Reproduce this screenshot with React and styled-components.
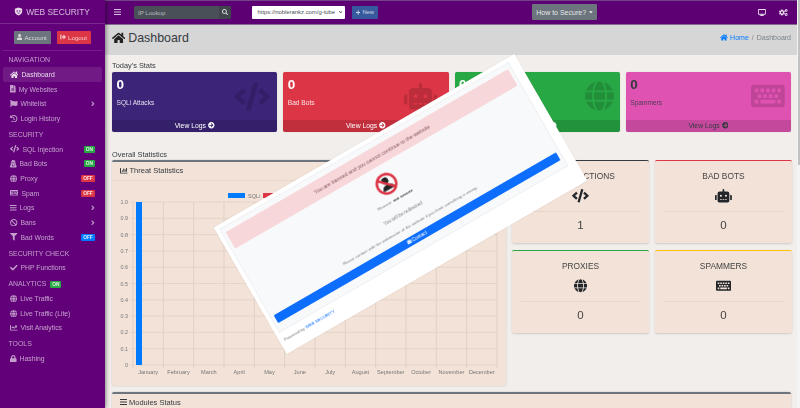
import React from "react";
import styled, { createGlobalStyle } from "styled-components";
import {
  FaHome, FaFileAlt, FaFlag, FaHistory, FaCode, FaRobot, FaGlobe, FaKeyboard, FaBars, FaBan, FaFilter,
  FaCheck, FaChartLine, FaLock, FaUser, FaSignOutAlt, FaDesktop, FaCogs, FaSearch, FaPlus, FaAngleRight,
  FaArrowCircleRight, FaChartBar, FaEnvelope, FaCaretDown, FaChevronDown, FaUserSecret,
} from "react-icons/fa";

const Global = createGlobalStyle`
  html, body { margin: 0; padding: 0; width: 800px; height: 408px; overflow: hidden; background: #f1eeeb; }
  body { font-family: "Liberation Sans", Arial, sans-serif; color: #343a40; }
  * { box-sizing: border-box; }
`;

/* Font Awesome glyphs keep their natural proportions, as on the original page */
const glyph = (Icon, ratio) => styled(Icon)`
  width: ${ratio}em;
  height: 1em;
  flex: none;
`;

const HomeIcon = glyph(FaHome, 1.125);
const FileIcon = glyph(FaFileAlt, 0.75);
const FlagIcon = glyph(FaFlag, 1);
const HistoryIcon = glyph(FaHistory, 1);
const CodeIcon = glyph(FaCode, 1.25);
const RobotIcon = glyph(FaRobot, 1.25);
const SecretIcon = glyph(FaUserSecret, 0.875);
const GlobeIcon = glyph(FaGlobe, 0.96875);
const KeyboardIcon = glyph(FaKeyboard, 1.125);
const BarsIcon = glyph(FaBars, 0.875);
const BanGlyph = glyph(FaBan, 1);
const FilterIcon = glyph(FaFilter, 1);
const CheckIcon = glyph(FaCheck, 1);
const LineIcon = glyph(FaChartLine, 1);
const LockIcon = glyph(FaLock, 0.875);
const UserIcon = glyph(FaUser, 0.875);
const SignOutIcon = glyph(FaSignOutAlt, 1);
const DesktopIcon = glyph(FaDesktop, 1.125);
const CogsIcon = glyph(FaCogs, 1.25);
const SearchIcon = glyph(FaSearch, 1);
const PlusIcon = glyph(FaPlus, 0.875);
const AngleIcon = glyph(FaAngleRight, 0.5);
const ArrowIcon = glyph(FaArrowCircleRight, 1);
const ChartBarIcon = glyph(FaChartBar, 1);
const MailIcon = glyph(FaEnvelope, 1);
const CaretIcon = glyph(FaCaretDown, 0.625);
const ChevDownIcon = glyph(FaChevronDown, 0.875);

const Page = styled.div`
  display: flex;
  width: 800px;
  height: 408px;
  overflow: hidden;
  position: relative;
  filter: blur(0.3px);
`;

const Sidebar = styled.aside`
  width: 105px;
  flex: none;
  background: #610078;
  color: rgba(255, 255, 255, 0.62);
  box-shadow: 1px 0 4px rgba(0, 0, 0, 0.45);
  z-index: 2;
  display: flex;
  flex-direction: column;
`;

const Brand = styled.div`
  height: 24px;
  display: flex;
  align-items: center;
  justify-content: center;
  gap: 3px;
  font-size: 8.4px;
  color: rgba(255, 255, 255, 0.72);
  border-bottom: 1px solid #7a2a8e;
  padding-right: 1px;
`;

const UserPanel = styled.div`
  height: 27px;
  margin: 0 3px;
  display: flex;
  justify-content: center;
  align-items: center;
  gap: 6px;
  border-bottom: 1px solid #7a1a90;
  padding: 0 8px 0 7px;
`;

const SmallBtn = styled.div`
  height: 13px;
  width: ${(p) => p.$w}px;
  background: ${(p) => p.$bg};
  color: rgba(255, 255, 255, 0.72);
  font-size: 6.2px;
  display: flex;
  align-items: center;
  justify-content: center;
  gap: 2px;
  border-radius: 1px;
  svg { font-size: 6px; }
`;

const SideLabel = styled.div`
  height: 16px;
  padding: 0 0 3px 8.5px;
  display: flex;
  align-items: flex-end;
  gap: 4px;
  font-size: 6.9px;
  line-height: 8px;
  color: rgba(255, 255, 255, 0.6);
`;

const SideItem = styled.div`
  height: 14.7px;
  margin: 0 3px;
  padding: 0 7px;
  display: flex;
  align-items: center;
  gap: 3px;
  font-size: 6.8px;
  border-radius: 2px;
  background: ${(p) => (p.$active ? "rgba(255,255,255,.1)" : "transparent")};
  color: ${(p) => (p.$active ? "rgba(255,255,255,.85)" : "rgba(255,255,255,.62)")};
  svg { font-size: 7.5px; }
`;

const ItemName = styled.span`
  flex: 1;
  white-space: nowrap;
`;

const Badge = styled.span`
  background: ${(p) => p.$bg};
  color: rgba(255, 255, 255, 0.85);
  font-size: 4.8px;
  font-weight: 700;
  line-height: 7px;
  padding: 0 2px;
  border-radius: 1px;
  min-width: ${(p) => p.$min || 10}px;
  text-align: center;
`;

const Main = styled.main`
  flex: 1;
  min-width: 0;
  display: flex;
  flex-direction: column;
`;

const Navbar = styled.nav`
  height: 25px;
  flex: none;
  background: #5c0073;
  border-top: 1px solid #73438a;
  border-bottom: 1px solid #86698f;
  display: flex;
  align-items: center;
  padding: 0 9px 0 9px;
  color: rgba(255, 255, 255, 0.75);
`;

const BurgerSlot = styled.div`
  font-size: 8px;
  margin-right: 13px;
  margin-top: -1px;
  display: flex;
`;

const SearchGroup = styled.div`
  width: 97px;
  height: 13px;
  margin-top: -1px;
  display: flex;
  background: #495057;
  border-radius: 2px;
  overflow: hidden;
  font-size: 6.1px;
  color: rgba(255, 255, 255, 0.6);
`;

const SearchField = styled.div`
  flex: 1;
  padding-left: 4px;
  display: flex;
  align-items: center;
`;

const SearchBtn = styled.div`
  width: 12px;
  background: #3f464c;
  display: flex;
  align-items: center;
  justify-content: center;
  font-size: 6px;
  color: #d8d8d8;
`;

const SiteSelect = styled.div`
  width: 93px;
  height: 13px;
  margin: -1px 0 0 21px;
  background: #fff;
  border-radius: 1px;
  display: flex;
  align-items: center;
  justify-content: space-between;
  padding: 0 3px 0 5.5px;
  font-size: 5.9px;
  color: #495057;
  white-space: nowrap;
  svg { font-size: 4px; color: #333; }
`;

const NewBtn = styled.div`
  width: 26px;
  height: 13px;
  margin: -1px 0 0 7px;
  background: #375a9e;
  border-radius: 1px;
  display: flex;
  align-items: center;
  justify-content: center;
  gap: 2px;
  font-size: 5.8px;
  color: rgba(255, 255, 255, 0.75);
  svg { font-size: 5px; }
`;

const HowBtn = styled.div`
  width: 65px;
  height: 16px;
  margin: -1px 0 0 154px;
  background: #6c757d;
  border-radius: 1px;
  display: flex;
  align-items: center;
  justify-content: center;
  gap: 3px;
  font-size: 7px;
  color: rgba(255, 255, 255, 0.85);
  svg { font-size: 6px; }
`;

const NavIcons = styled.div`
  margin-left: auto;
  display: flex;
  align-items: center;
  gap: 13px;
  font-size: 7px;
  margin-top: -1px;
  color: rgba(255, 255, 255, 0.85);
`;

const PageHead = styled.header`
  height: 30px;
  flex: none;
  background: #d6d6d6;
  display: flex;
  align-items: center;
  justify-content: space-between;
  padding: 0 6px 5px 7px;
`;

const Title = styled.h1`
  margin: 0;
  font-size: 12.4px;
  font-weight: 400;
  color: #343a40;
  display: flex;
  align-items: center;
  gap: 3px;
  svg { font-size: 11.8px; color: #222; }
`;

const Crumbs = styled.div`
  display: flex;
  align-items: center;
  gap: 3px;
  font-size: 7px;
  color: #7b8288;
`;

const CrumbHome = styled.span`
  color: #007bff;
  display: flex;
  align-items: center;
  gap: 2px;
`;

const Content = styled.div`
  flex: 1;
  min-height: 0;
  overflow: hidden;
  padding: 0 6px 0 7px;
`;

const SectionTitle = styled.div`
  font-size: 7.4px;
  line-height: 9px;
  color: #343a40;
  padding-top: ${(p) => p.$top}px;
  height: ${(p) => p.$h}px;
`;

const TopGrid = styled.div`
  display: grid;
  grid-template-columns: repeat(4, 165.25px);
  gap: 6px;
`;

const TopCard = styled.div`
  height: 59.5px;
  background: ${(p) => p.$bg};
  color: ${(p) => p.$fg};
  border-radius: 2px;
  box-shadow: 0 0 1px rgba(0, 0, 0, 0.25);
  overflow: hidden;
  display: flex;
  flex-direction: column;
`;

const TopBody = styled.div`
  flex: 1;
  display: flex;
  align-items: center;
  justify-content: space-between;
  padding: 0 ${(p) => p.$pr}px 0 4.5px;
`;

const TopText = styled.div`
  display: flex;
  flex-direction: column;
  align-self: flex-start;
`;

const TopNum = styled.div`
  font-size: 13.5px;
  font-weight: 700;
  line-height: 16px;
  margin-top: 5px;
`;

const TopLabel = styled.div`
  font-size: 6.6px;
  line-height: 9px;
  margin-top: 5px;
  opacity: 0.85;
`;

const TopIcon = styled.div`
  font-size: ${(p) => p.$size}px;
  line-height: 0;
  color: rgba(0, 0, 0, 0.15);
  margin-top: 1px;
`;

const TopFoot = styled.div`
  height: 12px;
  background: rgba(0, 0, 0, 0.12);
  display: flex;
  align-items: center;
  justify-content: center;
  gap: 2px;
  font-size: 6.8px;
  svg { font-size: 6.6px; }
`;

const StatsRow = styled.div`
  display: flex;
  gap: 6px;
  align-items: flex-start;
`;

const Panel = styled.section`
  background: #f2e2d8;
  border-top: 2px solid #6c757d;
  border-radius: 2px;
  box-shadow: 0 0 2px rgba(0, 0, 0, 0.2);
`;

const ChartPanel = styled(Panel)`
  width: 394px;
  height: 226px;
  flex: none;
`;

const PanelHead = styled.div`
  height: 19px;
  padding: 0 0 1px 8px;
  display: flex;
  align-items: center;
  gap: 2px;
  font-size: 7.5px;
  color: #343a40;
  border-bottom: 1px solid #e6d6cb;
  svg { font-size: 7.5px; }
`;

const ChartSvg = styled.svg`
  display: block;
`;

const Minis = styled.div`
  display: grid;
  grid-template-columns: repeat(2, 137px);
  gap: 7px 6px;
`;

const Mini = styled.div`
  height: 83px;
  background: #f2e2d8;
  border-top: 1px solid ${(p) => p.$line};
  border-radius: 2px;
  box-shadow: 0 1px 2px rgba(0, 0, 0, 0.15);
  display: flex;
  flex-direction: column;
  align-items: center;
  padding-top: 11px;
  color: #444;
`;

const MiniTitle = styled.div`
  font-size: 8.4px;
  line-height: 9px;
`;

const MiniIcon = styled.div`
  height: 13.5px;
  margin-top: 8px;
  font-size: 13.5px;
  color: #22262a;
  line-height: 0;
`;

const MiniValue = styled.div`
  width: 120px;
  margin-top: 8px;
  padding-top: 7.5px;
  border-top: 1px solid #e6d6cb;
  text-align: center;
  font-size: 11.5px;
  line-height: 13px;
`;

const ModulesPanel = styled(Panel)`
  height: 40px;
  margin-top: 6px;
`;

const ModulesHead = styled(PanelHead)`
  height: 17px;
  border-bottom: 0;
  color: #343a40;
  svg { font-size: 8px; }
`;

const Scroll = styled.div`
  width: 3px;
  flex: none;
  background: #f4f4f4;
  padding-left: 1px;
`;

const Thumb = styled.div`
  height: 165px;
  background: #c2c2c2;
`;

const BanCard = styled.div`
  position: absolute;
  left: 226.5px;
  top: 131px;
  width: 347px;
  height: 146px;
  background: #fff;
  transform: rotate(-30deg);
  padding: 4px 9px 0 4px;
  z-index: 5;
  box-shadow: 0 0 1px rgba(0, 0, 0, 0.15);
`;

const BanInner = styled.div`
  height: 120px;
  background: #f8f9fa;
  border: 1px solid #eef0f2;
  padding: 5px 3px 0;
  display: flex;
  flex-direction: column;
  align-items: center;
`;

const BanAlert = styled.div`
  align-self: stretch;
  height: 19px;
  background: #f8d7da;
  color: #85595e;
  font-size: 5.4px;
  display: flex;
  align-items: center;
  justify-content: center;
  border-radius: 1px;
  flex: none;
`;

const BanIcon = styled.svg`
  width: 23px;
  height: 23px;
  margin-top: 8px;
  flex: none;
`;

const BanLine = styled.div`
  font-size: ${(p) => p.$size}px;
  line-height: 6px;
  margin-top: ${(p) => p.$top}px;
  color: #7d8084;
  white-space: nowrap;
  b { color: #333; }
`;

const BanButton = styled.div`
  align-self: stretch;
  height: 9px;
  margin-top: 6px;
  background: #0d6efd;
  color: #fff;
  border-radius: 1px;
  font-size: 4.8px;
  display: flex;
  align-items: center;
  justify-content: center;
  gap: 1px;
  flex: none;
  svg { font-size: 4.6px; }
`;

const Powered = styled.div`
  font-size: 4.4px;
  line-height: 6px;
  margin-top: 6px;
  padding-left: 1px;
  color: #777;
  span { color: #0d6efd; }
`;

const Shield = () => (
  <svg width="9" height="9" viewBox="0 0 16 16">
    <path d="M8 1 L14.5 3 V8 C14.5 11.5 11.5 14 8 15 C4.5 14 1.5 11.5 1.5 8 V3 Z" fill="rgba(255,255,255,.85)" />
    <path d="M4.5 6.2 H7 V8 H4.5Z M9 6.2 H11.5 V8 H9Z M5 10 C6.5 11.8 9.5 11.8 11 10Z" fill="#610078" />
  </svg>
);

const items1 = [
  { n: "Dashboard", i: <HomeIcon />, active: true },
  { n: "My Websites", i: <FileIcon /> },
  { n: "Whitelist", i: <FlagIcon />, chev: true },
  { n: "Login History", i: <HistoryIcon /> },
];
const items2 = [
  { n: "SQL Injection", i: <CodeIcon />, b: ["ON", "#28a745"] },
  { n: "Bad Bots", i: <SecretIcon />, b: ["ON", "#28a745"] },
  { n: "Proxy", i: <GlobeIcon />, b: ["OFF", "#dc3545", 14] },
  { n: "Spam", i: <KeyboardIcon />, b: ["OFF", "#dc3545", 14] },
  { n: "Logs", i: <BarsIcon />, chev: true },
  { n: "Bans", i: <BanGlyph />, chev: true },
  { n: "Bad Words", i: <FilterIcon />, b: ["OFF", "#007bff", 14] },
];
const items3 = [{ n: "PHP Functions", i: <CheckIcon /> }];
const items4 = [
  { n: "Live Traffic", i: <GlobeIcon /> },
  { n: "Live Traffic (Lite)", i: <GlobeIcon /> },
  { n: "Visit Analytics", i: <LineIcon /> },
];
const items5 = [{ n: "Hashing", i: <LockIcon /> }];

const NavList = ({ items }) =>
  items.map((it) => (
    <SideItem key={it.n} $active={it.active}>
      {it.i}
      <ItemName>{it.n}</ItemName>
      {it.b && <Badge $bg={it.b[1]} $min={it.b[2]}>{it.b[0]}</Badge>}
      {it.chev && <AngleIcon />}
    </SideItem>
  ));

const topCards = [
  { l: "SQLi Attacks", bg: "#3c2579", fg: "#fff", icon: <CodeIcon />, size: 29, pr: 7 },
  { l: "Bad Bots", bg: "#dc3545", fg: "#fff", icon: <RobotIcon />, size: 26.5, pr: 11 },
  { l: "Proxies", bg: "#28a745", fg: "#fff", icon: <GlobeIcon />, size: 30, pr: 6 },
  { l: "Spammers", bg: "#e052b2", fg: "#343a40", icon: <KeyboardIcon />, size: 30, pr: 6 },
];

const minis = [
  { t: "SQL INJECTIONS", v: 1, c: "#343a40", i: <CodeIcon /> },
  { t: "BAD BOTS", v: 0, c: "#dc3545", i: <RobotIcon /> },
  { t: "PROXIES", v: 0, c: "#28a745", i: <GlobeIcon /> },
  { t: "SPAMMERS", v: 0, c: "#ffc107", i: <KeyboardIcon /> },
];

const months = ["January", "February", "March", "April", "May", "June", "July", "August", "September", "October", "November", "December"];
const ticks = ["1.0", "0.9", "0.8", "0.7", "0.6", "0.5", "0.4", "0.3", "0.2", "0.1", "0"];

const Chart = () => {
  const x0 = 21, cw = 30.33, y0 = 21, rh = 16.3;
  return (
    <ChartSvg width="394" height="205" viewBox="0 0 394 205" fontFamily="'Liberation Sans', Arial, sans-serif">
      <rect x="116" y="12" width="17" height="5" fill="#007bff" />
      <text x="136" y="16.5" fontSize="5.6" fill="#777">SQLi</text>
      <rect x="151" y="12" width="17" height="5" fill="#dc3545" />
      <text x="171" y="16.5" fontSize="5.6" fill="#777">Bad Bots</text>
      {ticks.map((t, i) => (
        <g key={t}>
          <line x1={x0 - 3} x2={x0 + cw * 12} y1={y0 + rh * i} y2={y0 + rh * i} stroke="#e4d4ca" strokeWidth="1" />
          <text x={x0 - 5} y={y0 + rh * i + 2} fontSize="5.4" fill="#777" textAnchor="end">{t}</text>
        </g>
      ))}
      {Array.from({ length: 13 }).map((_, i) => (
        <line key={i} x1={x0 + cw * i} x2={x0 + cw * i} y1={y0} y2={y0 + rh * 10 + 3} stroke="#e0d0c6" strokeWidth="1" />
      ))}
      {months.map((m, i) => (
        <text key={m} x={x0 + cw * (i + 0.5)} y={193} fontSize="5.6" fill="#777" textAnchor="middle">{m}</text>
      ))}
      <rect x="24" y={y0} width="6" height={rh * 10} fill="#007bff" />
    </ChartSvg>
  );
};

export default function App() {
  return (
    <Page>
      <Global />
      <Sidebar>
        <Brand><Shield />WEB SECURITY</Brand>
        <UserPanel>
          <SmallBtn $w={37} $bg="#6c757d"><UserIcon />Account</SmallBtn>
          <SmallBtn $w={34} $bg="#dc3545"><SignOutIcon />Logout</SmallBtn>
        </UserPanel>
        <SideLabel>NAVIGATION</SideLabel>
        <NavList items={items1} />
        <SideLabel>SECURITY</SideLabel>
        <NavList items={items2} />
        <SideLabel>SECURITY CHECK</SideLabel>
        <NavList items={items3} />
        <SideLabel>ANALYTICS <Badge $bg="#28a745">ON</Badge></SideLabel>
        <NavList items={items4} />
        <SideLabel>TOOLS</SideLabel>
        <NavList items={items5} />
      </Sidebar>
      <Main>
        <Navbar>
          <BurgerSlot><BarsIcon /></BurgerSlot>
          <SearchGroup>
            <SearchField>IP Lookup</SearchField>
            <SearchBtn><SearchIcon /></SearchBtn>
          </SearchGroup>
          <SiteSelect>https://noblerankz.com/g-tube<ChevDownIcon /></SiteSelect>
          <NewBtn><PlusIcon />New</NewBtn>
          <HowBtn>How to Secure? <CaretIcon /></HowBtn>
          <NavIcons><DesktopIcon /><CogsIcon /></NavIcons>
        </Navbar>
        <PageHead>
          <Title><HomeIcon />Dashboard</Title>
          <Crumbs>
            <CrumbHome><HomeIcon />Home</CrumbHome>
            <span>/</span>
            <span>Dashboard</span>
          </Crumbs>
        </PageHead>
        <Content>
          <SectionTitle $top={6} $h={17}>Today's Stats</SectionTitle>
          <TopGrid>
            {topCards.map((c) => (
              <TopCard key={c.l} $bg={c.bg} $fg={c.fg}>
                <TopBody $pr={c.pr}>
                  <TopText>
                    <TopNum>0</TopNum>
                    <TopLabel>{c.l}</TopLabel>
                  </TopText>
                  <TopIcon $size={c.size}>{c.icon}</TopIcon>
                </TopBody>
                <TopFoot>View Logs <ArrowIcon /></TopFoot>
              </TopCard>
            ))}
          </TopGrid>
          <SectionTitle $top={18} $h={28.5}>Overall Statistics</SectionTitle>
          <StatsRow>
            <ChartPanel>
              <PanelHead><ChartBarIcon />Threat Statistics</PanelHead>
              <Chart />
            </ChartPanel>
            <Minis>
              {minis.map((m) => (
                <Mini key={m.t} $line={m.c}>
                  <MiniTitle>{m.t}</MiniTitle>
                  <MiniIcon>{m.i}</MiniIcon>
                  <MiniValue>{m.v}</MiniValue>
                </Mini>
              ))}
            </Minis>
          </StatsRow>
          <ModulesPanel>
            <ModulesHead><BarsIcon />Modules Status</ModulesHead>
          </ModulesPanel>
        </Content>
      </Main>
      <Scroll><Thumb /></Scroll>
      <BanCard>
        <BanInner>
          <BanAlert>You are banned and you cannot continue to the website</BanAlert>
          <BanIcon viewBox="0 0 24 24">
            <circle cx="12" cy="8.5" r="3.6" fill="#222" />
            <path d="M5.5 18.5 C5.5 14.5 8 13 12 13 C16 13 18.5 14.5 18.5 18.5 Z" fill="#222" />
            <circle cx="12" cy="12" r="10.2" fill="none" stroke="#dc3545" strokeWidth="2.6" />
            <line x1="4.8" y1="4.8" x2="19.2" y2="19.2" stroke="#dc3545" strokeWidth="2.4" />
          </BanIcon>
          <BanLine $size={4.4} $top={4}>Reason: <b>not secure</b></BanLine>
          <BanLine $size={4.6} $top={10}>You will be redirected</BanLine>
          <BanLine $size={4.3} $top={8}>Please contact with the webmaster of the website if you think something is wrong.</BanLine>
          <BanButton><MailIcon />Contact</BanButton>
        </BanInner>
        <Powered>Powered by <span>WEB SECURITY</span></Powered>
      </BanCard>
    </Page>
  );
}
